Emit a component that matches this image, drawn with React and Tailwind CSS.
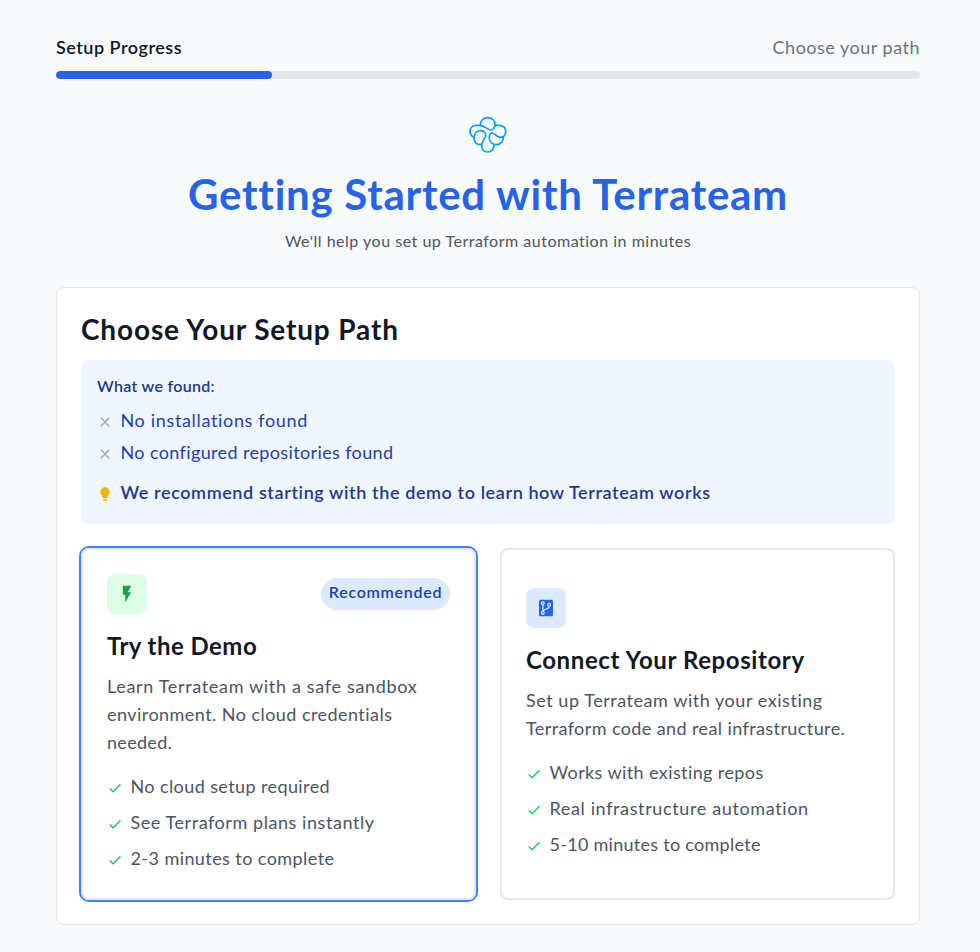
import React from 'react';

const PATHS = {
  check: 'M21 7L9 19l-5.5-5.5l1.41-1.41L9 16.17L19.59 5.59z',
  close:
    'M19 6.41L17.59 5L12 10.59L6.41 5L5 6.41L10.59 12L5 17.59L6.41 19L12 13.41L17.59 19L19 17.59L13.41 12z',
  bulb: 'M12 2a7 7 0 0 0-7 7c0 2.38 1.19 4.47 3 5.74V17a1 1 0 0 0 1 1h6a1 1 0 0 0 1-1v-2.26c1.81-1.27 3-3.36 3-5.74a7 7 0 0 0-7-7M9 21a1 1 0 0 0 1 1h4a1 1 0 0 0 1-1v-1H9z',
  flash: 'M7 2v11h3v9l7-12h-4l4-8z',
};

function Icon({ name, className }) {
  return (
    <svg viewBox="0 0 24 24" fill="currentColor" className={className}>
      <path d={PATHS[name]} />
    </svg>
  );
}

function RepoIcon() {
  return (
    <svg viewBox="0 0 24 24" className="h-5 w-5" fill="none">
      <rect x="3.6" y="2" width="16.8" height="20" rx="1.8" fill="#2563eb" />
      <g stroke="#dbeafe" strokeWidth="1.5">
        <circle cx="8.2" cy="6.2" r="1.7" />
        <circle cx="8.2" cy="17.8" r="1.7" />
        <circle cx="15.8" cy="8.2" r="1.7" />
        <path d="M8.2 7.9v8.2M15.8 9.9c0 3.8-5.6 2.6-7.2 5.6" />
      </g>
    </svg>
  );
}

function Logo() {
  return (
    <svg
      viewBox="28 30 114 114"
      className="h-[38px] w-[38px]"
      fill="none"
      stroke="#0a9bff"
      strokeWidth="5"
      strokeLinecap="round"
      strokeLinejoin="round"
    >
      <path d="M62 58C61 44 71 35 84 35C97 35 106 44 106 57C106 65 100 72 93 72C82 71 76 59 62 58H50C38 58 31 66 31 76C32 86 37 92 44 93" />
      <path d="M106 58H120C132 59 138 67 138 76C138 87 132 94 123 94C110 95 107 82 98 81C90 81 88 91 89 98C91 109 100 116 110 116C123 116 132 106 131 92" />
      <path d="M66 114C53 119 42 108 43 94C44 81 53 74 63 74C74 74 80 83 78 91C75 100 66 103 66 120C67 131 74 138 84 138C95 138 104 129 103 116" />
    </svg>
  );
}

function CheckItem({ className, children }) {
  return (
    <li className="flex h-7 items-center">
      <Icon name="check" className="mr-[7.5px] mt-1 h-4 w-4 shrink-0 text-[#22c55e]" />
      <span className={className}>{children}</span>
    </li>
  );
}

export default function App() {
  return (
    <div className="min-h-[952px] bg-[#f9fafb] pl-14 pr-[60px] pt-[33px] font-['Lato','Open_Sans',sans-serif] text-lg text-[#4b5563]">
      <div className="flex h-7 items-center justify-between leading-7">
        <span className="font-semibold tracking-[0.5px] text-[#111827]">Setup Progress</span>
        <span className="tracking-[0.5px] text-[#6b7280]">Choose your path</span>
      </div>
      <div className="mt-2.5 h-2 overflow-hidden rounded-full bg-[#e5e7eb]">
        <div className="h-full w-1/4 rounded-full bg-[#2563eb]" />
      </div>

      <header className="mt-[37px] flex flex-col items-center">
        <Logo />
        <h1 className="mt-4 h-12 whitespace-nowrap text-[42px] font-bold leading-[48px] tracking-[0.74px] text-[#2563eb]">
          Getting Started with Terrateam
        </h1>
        <p className="mt-[11px] h-6 whitespace-nowrap text-base tracking-[0.51px]">
          We'll help you set up Terraform automation in minutes
        </p>
      </header>

      <main className="mt-[34px] h-[638px] rounded-lg border border-[#e5e7eb] bg-white px-6 pt-[23px]">
        <h2 className="h-9 whitespace-nowrap text-[28px] font-bold leading-9 tracking-[0.85px] text-[#111827]">
          Choose Your Setup Path
        </h2>
        <section className="mt-[13px] h-[164px] rounded-lg bg-[#eff6ff] px-4 pt-3.5 text-[#1e40af]">
          <h3 className="h-6 text-base font-semibold leading-6 tracking-[0.3px] text-[#1e3a8a]">
            What we found:
          </h3>
          <div className="mt-2 flex h-7 items-center tracking-[0.66px]">
            <Icon name="close" className="mr-[7.5px] mt-1 h-4 w-4 text-[#9ca3af]" />
            No installations found
          </div>
          <div className="mt-1 flex h-7 items-center tracking-[0.37px]">
            <Icon name="close" className="mr-[7.5px] mt-1 h-4 w-4 text-[#9ca3af]" />
            No configured repositories found
          </div>
          <div className="mt-3 flex h-7 items-center font-semibold tracking-[0.6px] text-[#1e3a8a]">
            <Icon name="bulb" className="mr-[7.5px] mt-1 h-4 w-4 text-[#eab308]" />
            We recommend starting with the demo to learn how Terrateam works
          </div>
        </section>

        <div className="mt-6 grid h-[352px] grid-cols-2 gap-6">
          <article className="rounded-lg border-2 border-[#e5e7eb] p-6 ring-2 ring-[#3b82f6]">
            <div className="flex justify-between">
              <div className="flex h-10 w-10 items-center justify-center rounded-lg bg-[#dcfce7]">
                <Icon name="flash" className="h-5 w-5 text-[#16a34a]" />
              </div>
              <span className="mt-1 flex h-8 w-[129px] justify-center rounded-full bg-[#dbeafe] text-base font-semibold leading-[28px] tracking-[0.72px] text-[#1e40af]">
                Recommended
              </span>
            </div>
            <h3 className="mt-4 h-8 text-2xl font-bold leading-8 tracking-[0.45px] text-[#111827]">
              Try the Demo
            </h3>
            <p className="mt-2.5 whitespace-nowrap leading-7">
              <span className="tracking-[0.67px]">Learn Terrateam with a safe sandbox</span>
              <br />
              <span className="tracking-[0.45px]">environment. No cloud credentials</span>
              <br />
              <span className="tracking-[0.3px]">needed.</span>
            </p>
            <ul className="mt-4 space-y-2">
              <CheckItem className="tracking-[0.4px]">No cloud setup required</CheckItem>
              <CheckItem className="tracking-[0.56px]">See Terraform plans instantly</CheckItem>
              <CheckItem className="tracking-[0.43px]">2-3 minutes to complete</CheckItem>
            </ul>
          </article>

          <article className="rounded-lg border-2 border-[#e5e7eb] px-6 pt-[38px]">
            <div className="flex h-10 w-10 items-center justify-center rounded-lg bg-[#dbeafe]">
              <RepoIcon />
            </div>
            <h3 className="mt-4 h-8 whitespace-nowrap text-2xl font-bold leading-8 tracking-[0.6px] text-[#111827]">
              Connect Your Repository
            </h3>
            <p className="mt-2.5 whitespace-nowrap leading-7">
              <span className="tracking-[0.54px]">Set up Terrateam with your existing</span>
              <br />
              <span className="tracking-[0.4px]">Terraform code and real infrastructure.</span>
            </p>
            <ul className="mt-4 space-y-2">
              <CheckItem className="tracking-[0.4px]">Works with existing repos</CheckItem>
              <CheckItem className="tracking-[0.63px]">Real infrastructure automation</CheckItem>
              <CheckItem className="tracking-[0.28px]">5-10 minutes to complete</CheckItem>
            </ul>
          </article>
        </div>
      </main>
    </div>
  );
}
